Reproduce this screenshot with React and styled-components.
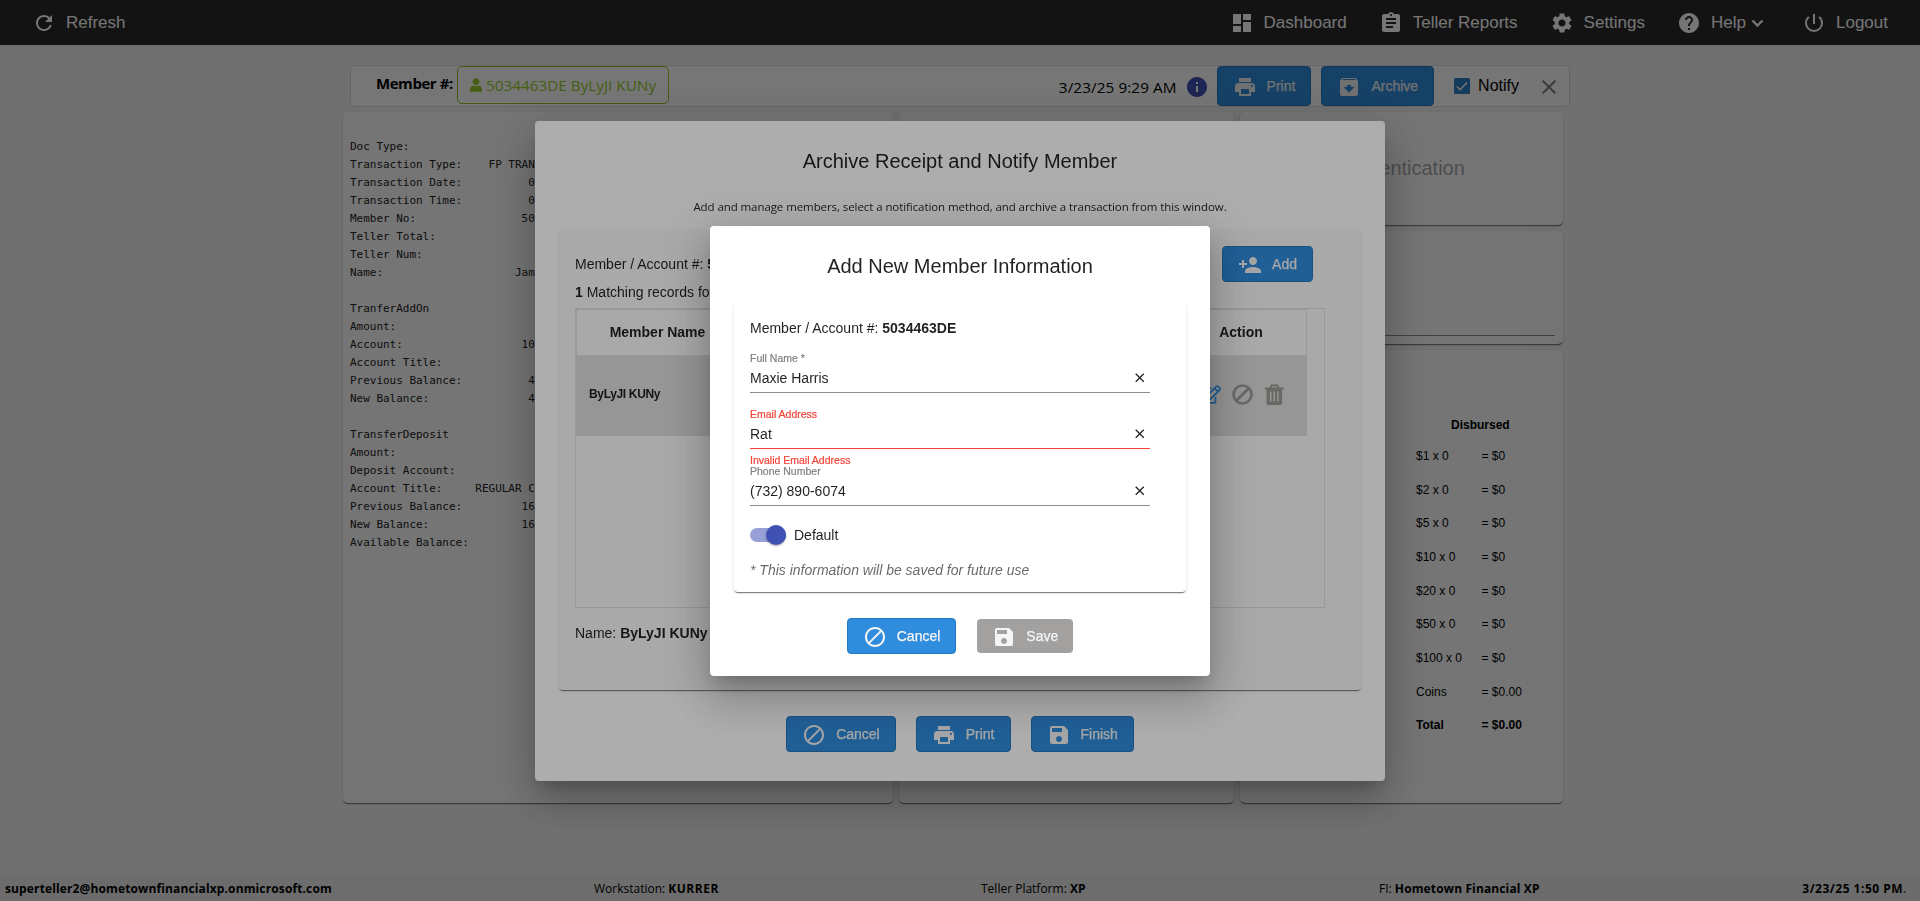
import React from "react";
import styled, { createGlobalStyle, css } from "styled-components";
import {
  MdRefresh,
  MdDashboard,
  MdAssignment,
  MdSettings,
  MdHelp,
  MdPowerSettingsNew,
  MdPrint,
  MdArchive,
  MdPersonAdd,
  MdBlock,
  MdSave,
  MdClose,
  MdInfo,
} from "react-icons/md";
import { FaUser, FaRegEdit } from "react-icons/fa";

const sans = `"Liberation Sans", Arial, sans-serif`;
const humanist = `"Open Sans", "Noto Sans", sans-serif`;
const mono = `"DejaVu Sans Mono", "Liberation Mono", monospace`;

const GlobalStyle = createGlobalStyle`
  * { box-sizing: border-box; }
  body { margin: 0; overflow: hidden; font-family: ${sans}; color: #000; }
`;

const cardShadow = css`
  box-shadow: 0 2px 1px -1px rgba(0, 0, 0, 0.4), 0 1px 1px 0 rgba(0, 0, 0, 0.14),
    0 1px 3px 0 rgba(0, 0, 0, 0.12);
`;

/* ---------- Page ---------- */

const Page = styled.div`
  width: 100vw;
  height: 901px;
  display: flex;
  flex-direction: column;
  background: #f3f3f3;
`;

const NavBar = styled.nav`
  height: 45px;
  padding: 0 32px 0 32px;
  display: flex;
  align-items: center;
  justify-content: space-between;
  background: #2b2b2b;
  color: #fff;
  font-size: 17px;
  line-height: 20px;
`;

const NavGroup = styled.div`
  display: flex;
  gap: 32px;
`;

const NavItem = styled.a`
  display: flex;
  align-items: center;
  gap: 10px;

  > svg:first-child {
    width: 24px;
    height: 24px;
  }
`;

const Caret = styled.svg`
  width: 13px;
  height: 9px;
  margin: 1px 6px 0 -5px;
  fill: none;
  stroke: #fff;
  stroke-width: 2.4;
`;

const Content = styled.main`
  flex: 1;
  width: 1227px;
  margin: 20px 0 0 343px;
`;

const Toolbar = styled.div`
  height: 42px;
  margin-left: 7px;
  padding: 0 8px 0 25px;
  display: flex;
  align-items: center;
  background: #fff;
  border: 1px solid #dcdcdc;
  border-radius: 4px;
`;

const MemberLabel = styled.b`
  width: 81px;
  font: 700 15px/22px ${humanist};
  margin-top: -6px;
  letter-spacing: -0.45px;
`;

const MemberChip = styled.div`
  width: 212px;
  height: 38px;
  margin-top: -2px;
  padding-left: 12px;
  display: flex;
  align-items: center;
  gap: 4px;
  border: 1px solid #8fc41e;
  border-radius: 5px;
  color: #94cb2b;
  font: 15.3px/20px ${humanist};
  white-space: nowrap;

  svg {
    width: 12px;
    height: 14px;
  }
`;

const Stamp = styled.span`
  margin-left: auto;
  margin-right: 8px;
  font: 15.3px/20px ${humanist};
  letter-spacing: 0.08px;
  white-space: nowrap;
  padding-top: 1px;
`;

const InfoIcon = styled(MdInfo)`
  width: 24px;
  height: 24px;
  margin: 2px 8px 0 0;
  color: #3f51b5;
`;

const Button = styled.button`
  height: ${(p) => p.$height || 36}px;
  margin-left: ${(p) => p.$gap || 0}px;
  padding: 0 15px;
  display: inline-flex;
  align-items: center;
  gap: 10px;
  flex: none;
  border: 1px solid #2579bf;
  border-radius: 4px;
  background: #308dde;
  color: #f5f5f5;
  font: 14px/20px ${sans};
  -webkit-text-stroke: 0.25px;

  svg {
    width: 24px;
    height: 24px;
    position: relative;
    top: 1px;
    stroke: none;
  }

  &:disabled {
    border: 0;
    background: #a3a19f;
    height: 34px;
    padding: 0 15px;
  }
`;

const Checkbox = styled.svg`
  width: 16px;
  height: 16px;
  margin: 0 8px 0 20px;
`;

const NotifyText = styled.span`
  font-size: 16px;
  line-height: 20px;
`;

const CloseIcon = styled(MdClose)`
  width: 24px;
  height: 24px;
  margin: 2px 0 0 18px;
  color: #808080;
`;

const Columns = styled.div`
  margin-top: 5px;
  height: 691px;
  display: grid;
  grid-template-columns: 550px 335px 323px;
  gap: 6px;
`;

const SideColumn = styled.div`
  display: grid;
  grid-template-rows: 113px 113px 1fr;
  gap: 6px;
`;

const Card = styled.section`
  background: #fdfdfd;
  border-radius: 5px;
  ${cardShadow}
`;

const Receipt = styled.pre`
  margin: 0;
  padding: 26px 7px 0;
  font: 11px/18px ${mono};
  letter-spacing: -0.025px;
  color: #222;
`;

const AuthTitle = styled.h3`
  margin: 0;
  line-height: 24px;
  padding-top: 44px;
  text-align: center;
  font-size: 20px;
  font-weight: 400;
  color: #a6a6a6;
`;

const SignatureLine = styled.div`
  margin: 104px 8px 0;
  border-bottom: 1px solid #8c8c8c;
`;

const CashTable = styled.div`
  padding: 67px 0 0 176px;
  font-size: 12px;
`;

const CashHead = styled.b`
  display: block;
  padding-left: 35px;
  line-height: 16px;
  margin-bottom: 7px;
`;

const CashRow = styled.div`
  display: grid;
  grid-template-columns: 65.5px 1fr;
  line-height: 33.67px;
  font-weight: ${(p) => (p.$total ? 700 : 400)};
`;

const StatusBar = styled.footer`
  height: 26px;
  padding: 1px 13px 0 5px;
  display: grid;
  grid-template-columns: 589px 387px 398px 1fr auto;
  align-items: center;
  background: #ebebeb;
  font: 12px/20px ${humanist};

  b {
    letter-spacing: 0.13px;
  }
`;

const Workstation = styled.b`
  && {
    letter-spacing: 0.5px;
  }
`;

const Clock = styled.b`
  && {
    letter-spacing: 0.5px;
  }
  span {
    color: #666;
  }
`;

/* ---------- Dialogs ---------- */

const Backdrop = styled.div`
  position: fixed;
  inset: 0;
  padding-top: 1px;
  display: flex;
  align-items: center;
  justify-content: center;
  background: rgba(0, 0, 0, 0.32);
`;

const Dialog = styled.div`
  width: ${(p) => p.$width}px;
  height: ${(p) => p.$height}px;
  padding: 0 24px;
  display: flex;
  flex-direction: column;
  align-items: stretch;
  background: #fff;
  border-radius: 4px;
  color: rgba(0, 0, 0, 0.87);
  font-size: 14px;
  line-height: 20px;
  box-shadow: 0 11px 15px -7px rgba(0, 0, 0, 0.2), 0 24px 38px 3px rgba(0, 0, 0, 0.14),
    0 9px 46px 8px rgba(0, 0, 0, 0.12);
`;

const DialogTitle = styled.h2`
  margin: 28px 0 0;
  text-align: center;
  font-size: 20px;
  font-weight: 400;
  line-height: 24px;
`;

const DialogHint = styled.p`
  margin: 24px 0 0;
  text-align: center;
  font: 11.5px/20px ${humanist};
  letter-spacing: -0.08px;
`;

const Panel = styled.div`
  margin-top: ${(p) => p.$top}px;
  height: ${(p) => p.$height}px;
  padding: 0 16px;
  background: ${(p) => p.$fill || "#fff"};
  border-radius: 4px;
  ${cardShadow}
  clip-path: inset(0 -4px -4px -4px);
`;

const PanelHead = styled.div`
  display: flex;
  justify-content: space-between;
  padding: 17px 32px 0 0;
`;

const PanelText = styled.div`
  padding-top: ${(p) => p.$top || 0}px;
  font-style: ${(p) => (p.$note ? "italic" : "normal")};
  color: ${(p) => (p.$note ? "rgba(0, 0, 0, 0.6)" : "inherit")};
`;

const Grid = styled.div`
  width: 750px;
  height: 300px;
  margin-top: 6px;
  border: 1px solid #dce0e6;
`;

const GridInner = styled.div`
  width: 731px;
  border: 1px solid #dce0e6;
  border-width: 1px 1px 0 1px;
`;

const gridColumns = css`
  display: grid;
  grid-template-columns: 161px 1fr 130px;
  align-items: center;
`;

const GridHead = styled.div`
  ${gridColumns}
  height: 47px;
  padding-bottom: 2px;
  border-bottom: 2px solid #dce0e6;
  font-weight: 700;
  text-align: center;
`;

const GridRow = styled.div`
  ${gridColumns}
  height: 79px;
  margin: 0 -1px;
  padding-bottom: 4px;
  background: #dedede;

  b {
    margin-top: -1px;
    padding-left: 13px;
    font-size: 12px;
    letter-spacing: -0.34px;
  }
`;

const RowActions = styled.div`
  display: flex;
  align-items: center;
  gap: 11px;
  padding-left: 23px;
  color: #9a9a96;

  svg {
    width: 21px;
    height: 21px;
  }
  svg:first-child {
    color: #308dde;
  }
`;

const Actions = styled.div`
  display: flex;
  align-items: center;
  justify-content: center;
  gap: ${(p) => p.$gap || 20}px;
  margin-top: ${(p) => p.$top}px;
`;

const Field = styled.label`
  display: block;
  width: 400px;
  margin-top: ${(p) => p.$top}px;
  border-bottom: 1px solid ${(p) => (p.$invalid ? "#f44336" : "rgba(0, 0, 0, 0.44)")};
`;

const FieldLabel = styled.span`
  display: block;
  height: 12px;
  font-size: 10.5px;
  line-height: 12px;
  color: ${(p) => (p.$invalid ? "#f44336" : "#808080")};
  -webkit-text-stroke: 0.2px;
`;

const FieldValue = styled.span`
  display: flex;
  align-items: center;
  justify-content: space-between;
  height: 20px;
  margin: 4px 3px 4px 0;

  svg {
    width: 15.5px;
    height: 15.5px;
    color: #222;
  }
`;

const FieldError = styled.div`
  height: 12px;
  margin: 5px 0 -16px;
  font-size: 10.5px;
  line-height: 12px;
  color: #f44336;
  -webkit-text-stroke: 0.2px;
`;

const ToggleRow = styled.div`
  display: flex;
  align-items: center;
  gap: 8px;
  margin-top: 19px;
`;

const ToggleTrack = styled.span`
  width: 36px;
  height: 14px;
  display: flex;
  align-items: center;
  justify-content: flex-end;
  border-radius: 7px;
  background: rgba(63, 81, 181, 0.54);
`;

const ToggleThumb = styled.span`
  width: 20px;
  height: 20px;
  border-radius: 50%;
  background: #3f51b5;
  box-shadow: 0 1px 2px rgba(0, 0, 0, 0.35);
`;

const receiptText = `Doc Type:
Transaction Type:    FP TRANSFER
Transaction Date:          03/23
Transaction Time:          09:29
Member No:                5034463
Teller Total:
Teller Num:
Name:                    James

TranferAddOn
Amount:
Account:                  10
Account Title:
Previous Balance:          4
New Balance:               4

TransferDeposit
Amount:
Deposit Account:
Account Title:     REGULAR CHK
Previous Balance:         16
New Balance:              16
Available Balance:`;

const cashRows = [
  ["$1 x 0", "$0"],
  ["$2 x 0", "$0"],
  ["$5 x 0", "$0"],
  ["$10 x 0", "$0"],
  ["$20 x 0", "$0"],
  ["$50 x 0", "$0"],
  ["$100 x 0", "$0"],
  ["Coins", "$0.00"],
  ["Total", "$0.00"],
];

const BanIcon = () => (
  <svg viewBox="0 0 21 21" fill="none" stroke="currentColor" strokeWidth="2.7">
    <circle cx="10.5" cy="10.5" r="9" />
    <path d="M4.3 16.7 16.7 4.3" />
  </svg>
);

const TrashIcon = () => (
  <svg viewBox="0 0 21 21" fill="none" stroke="currentColor">
    <path strokeWidth="2" d="M.8 4.500h19M6.500 4 7.500 1.500h6L14.500 4" />
    <path stroke="none" fill="currentColor" d="M2.500 5h15.600v14q0 2-2 2H4.500q-2 0-2-2z" />
    <path stroke="#dedede" strokeWidth="1.500" d="M6.700 7.500v10M10.300 7.500v10M13.900 7.500v10" />
  </svg>
);

const navItems = [
  [MdDashboard, "Dashboard"],
  [MdAssignment, "Teller Reports"],
  [MdSettings, "Settings"],
  [MdHelp, "Help"],
  [MdPowerSettingsNew, "Logout"],
];

function TextField({ label, value, error, top }) {
  return (
    <>
      <Field $top={top} $invalid={!!error}>
        <FieldLabel $invalid={!!error}>{label}</FieldLabel>
        <FieldValue>
          {value}
          <MdClose />
        </FieldValue>
      </Field>
      {error && <FieldError>{error}</FieldError>}
    </>
  );
}

export default function App() {
  return (
    <>
      <GlobalStyle />
      <Page>
        <NavBar>
          <NavItem>
            <MdRefresh />
            <span>Refresh</span>
          </NavItem>
          <NavGroup>
            {navItems.map(([Icon, text]) => (
              <NavItem key={text}>
                <Icon />
                <span>{text}</span>
                {text === "Help" && (
                  <Caret viewBox="0 0 13 9">
                    <path d="M1.500 1.500 6.500 6.500 11.500 1.500" />
                  </Caret>
                )}
              </NavItem>
            ))}
          </NavGroup>
        </NavBar>

        <Content>
          <Toolbar>
            <MemberLabel>Member #:</MemberLabel>
            <MemberChip>
              <FaUser />
              5034463DE ByLyJI KUNy
            </MemberChip>
            <Stamp>3/23/25 9:29 AM</Stamp>
            <InfoIcon />
            <Button $height={40}>
              <MdPrint />
              Print
            </Button>
            <Button $height={40} $gap={10}>
              <MdArchive />
              Archive
            </Button>
            <Checkbox viewBox="0 0 16 16">
              <rect width="16" height="16" rx="1.500" fill="#2f80c8" />
              <path d="M3 8.500 6.200 11.700 13 4.500" fill="none" stroke="#fff" strokeWidth="1.400" />
            </Checkbox>
            <NotifyText>Notify</NotifyText>
            <CloseIcon />
          </Toolbar>

          <Columns>
            <Card>
              <Receipt>{receiptText}</Receipt>
            </Card>
            <Card />
            <SideColumn>
              <Card>
                <AuthTitle>Authentication</AuthTitle>
              </Card>
              <Card>
                <SignatureLine />
              </Card>
              <Card>
                <CashTable>
                  <CashHead>Disbursed</CashHead>
                  {cashRows.map(([label, amount]) => (
                    <CashRow key={label} $total={label === "Total"}>
                      <span>{label}</span>
                      <span>= {amount}</span>
                    </CashRow>
                  ))}
                </CashTable>
              </Card>
            </SideColumn>
          </Columns>
        </Content>

        <StatusBar>
          <b>superteller2@hometownfinancialxp.onmicrosoft.com</b>
          <span>
            Workstation: <Workstation>KURRER</Workstation>
          </span>
          <span>
            Teller Platform: <b>XP</b>
          </span>
          <span>
            FI: <b>Hometown Financial XP</b>
          </span>
          <Clock>
            3/23/25 1:50 PM<span>.</span>
          </Clock>
        </StatusBar>
      </Page>

      <Backdrop>
        <Dialog $width={850} $height={660}>
          <DialogTitle>Archive Receipt and Notify Member</DialogTitle>
          <DialogHint>
            Add and manage members, select a notification method, and archive a transaction from this window.
          </DialogHint>
          <Panel $top={12} $height={461} $fill="#fafafa">
            <PanelHead>
              <div>
                <PanelText $top={8}>
                  Member / Account #: <b>5034463DE</b>
                </PanelText>
                <PanelText $top={8}>
                  <b>1</b> Matching records found
                </PanelText>
              </div>
              <Button>
                <MdPersonAdd />
                Add
              </Button>
            </PanelHead>
            <Grid>
              <GridInner>
                <GridHead>
                  <span>Member Name</span>
                  <span />
                  <span>Action</span>
                </GridHead>
                <GridRow>
                  <b>ByLyJI KUNy</b>
                  <span />
                  <RowActions>
                    <FaRegEdit />
                    <BanIcon />
                    <TrashIcon />
                  </RowActions>
                </GridRow>
              </GridInner>
            </Grid>
            <PanelText $top={15}>
              Name: <b>ByLyJI KUNy</b>
            </PanelText>
          </Panel>
          <Actions $top={26}>
            <Button>
              <MdBlock />
              Cancel
            </Button>
            <Button>
              <MdPrint />
              Print
            </Button>
            <Button>
              <MdSave />
              Finish
            </Button>
          </Actions>
        </Dialog>
      </Backdrop>

      <Backdrop>
        <Dialog $width={500} $height={450}>
          <DialogTitle>Add New Member Information</DialogTitle>
          <Panel $top={24} $height={290}>
            <PanelText $top={16}>
              Member / Account #: <b>5034463DE</b>
            </PanelText>
            <TextField top={14} label="Full Name *" value="Maxie Harris" />
            <TextField top={15} label="Email Address" value="Rat" error="Invalid Email Address" />
            <TextField top={15} label="Phone Number" value="(732) 890-6074" />
            <ToggleRow>
              <ToggleTrack>
                <ToggleThumb />
              </ToggleTrack>
              Default
            </ToggleRow>
            <PanelText $top={15} $note>
              * This information will be saved for future use
            </PanelText>
          </Panel>
          <Actions $top={26} $gap={21}>
            <Button>
              <MdBlock />
              Cancel
            </Button>
            <Button disabled>
              <MdSave />
              Save
            </Button>
          </Actions>
        </Dialog>
      </Backdrop>
    </>
  );
}
